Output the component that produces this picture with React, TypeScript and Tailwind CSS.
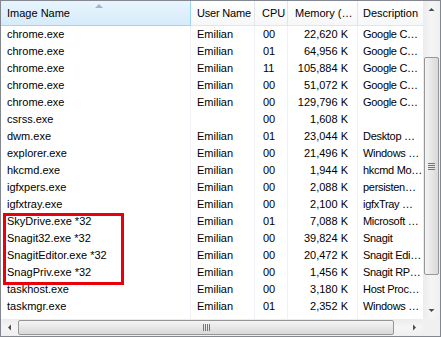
import React from 'react';

type Proc = { name: string; user: string; cpu: string; mem: string; desc: string };

const procs: Proc[] = [
  { name: 'chrome.exe', user: 'Emilian', cpu: '00', mem: '22,620 K', desc: 'Google C…' },
  { name: 'chrome.exe', user: 'Emilian', cpu: '01', mem: '64,956 K', desc: 'Google C…' },
  { name: 'chrome.exe', user: 'Emilian', cpu: '11', mem: '105,884 K', desc: 'Google C…' },
  { name: 'chrome.exe', user: 'Emilian', cpu: '00', mem: '51,072 K', desc: 'Google C…' },
  { name: 'chrome.exe', user: 'Emilian', cpu: '00', mem: '129,796 K', desc: 'Google C…' },
  { name: 'csrss.exe', user: '', cpu: '00', mem: '1,608 K', desc: '' },
  { name: 'dwm.exe', user: 'Emilian', cpu: '01', mem: '23,044 K', desc: 'Desktop …' },
  { name: 'explorer.exe', user: 'Emilian', cpu: '00', mem: '21,496 K', desc: 'Windows …' },
  { name: 'hkcmd.exe', user: 'Emilian', cpu: '00', mem: '1,944 K', desc: 'hkcmd Mo…' },
  { name: 'igfxpers.exe', user: 'Emilian', cpu: '00', mem: '2,088 K', desc: 'persisten…' },
  { name: 'igfxtray.exe', user: 'Emilian', cpu: '00', mem: '2,100 K', desc: 'igfxTray …' },
  { name: 'SkyDrive.exe *32', user: 'Emilian', cpu: '01', mem: '7,088 K', desc: 'Microsoft …' },
  { name: 'Snagit32.exe *32', user: 'Emilian', cpu: '00', mem: '39,824 K', desc: 'Snagit' },
  { name: 'SnagitEditor.exe *32', user: 'Emilian', cpu: '00', mem: '20,472 K', desc: 'Snagit Edi…' },
  { name: 'SnagPriv.exe *32', user: 'Emilian', cpu: '00', mem: '1,456 K', desc: 'Snagit RP…' },
  { name: 'taskhost.exe', user: 'Emilian', cpu: '00', mem: '3,180 K', desc: 'Host Proc…' },
  { name: 'taskmgr.exe', user: 'Emilian', cpu: '01', mem: '2,352 K', desc: 'Windows …' },
];

function Arrow({ dir }: { dir: 'up' | 'down' | 'left' | 'right' }) {
  const pts = {
    up: '0.5,4 3.5,1 6.5,4',
    down: '0.5,1 3.5,4 6.5,1',
    left: '4,0.5 1,3.5 4,6.5',
    right: '1,0.5 4,3.5 1,6.5',
  }[dir];
  const w = dir === 'up' || dir === 'down' ? 7 : 5;
  const h = dir === 'up' || dir === 'down' ? 5 : 7;
  return (
    <svg width={w} height={h} viewBox={`0 0 ${w} ${h}`}>
      <polygon points={pts} fill="#4d4d4d" />
    </svg>
  );
}

export default function App() {
  return (
    <div
      className="relative w-[441px] h-[337px] border border-[#828790] bg-white flex flex-col text-[11px] text-black overflow-hidden"
      style={{ fontFamily: '"Liberation Sans", Arial, sans-serif' }}
    >
      <div className="flex h-[318px]">
        {/* table */}
        <div className="w-[422px] flex flex-col">
          <div className="flex h-[25px] bg-gradient-to-b from-white to-[#f6f7f8] border-b border-[#e5e5e5]">
            <div className="relative w-[190px] flex items-center pl-[6px] bg-gradient-to-b from-[#e8f5fd] to-[#d6ebfa] border-r border-b border-[#96d9f9] -mb-px">
              <svg className="absolute left-[94px] top-[3px]" width="8" height="4" viewBox="0 0 8 4">
                <polygon points="0,4 4,0 8,4" fill="#a2b5cc" />
              </svg>
              Image Name
            </div>
            <div className="w-[64px] flex items-center pl-[6px] tracking-[-0.2px] border-r border-[#e5e5e5]">User Name</div>
            <div className="w-[33px] flex items-center pl-[7px] border-r border-[#e5e5e5]">CPU</div>
            <div className="w-[70px] flex items-center pl-[7px] border-r border-[#e5e5e5]">Memory (…</div>
            <div className="w-[65px] flex items-center pl-[5px]">Description</div>
          </div>
          <div className="flex-1 flex flex-col">
            {procs.map((p, i) => (
              <div key={i} className="flex h-[17px] leading-[17px] whitespace-nowrap">
                <div className="w-[190px] pl-[6px] border-r border-[#eef1f6]">{p.name}</div>
                <div className="w-[64px] pl-[6px] border-r border-[#eef1f6]">{p.user}</div>
                <div className="w-[33px] pl-[8px] border-r border-[#eef1f6]">{p.cpu}</div>
                <div className="w-[70px] pr-[9px] text-right border-r border-[#eef1f6]">{p.mem}</div>
                <div className="w-[65px] pl-[5px] tracking-[-0.3px] overflow-hidden">{p.desc}</div>
              </div>
            ))}
            <div className="flex flex-1">
              <div className="w-[190px] border-r border-[#eef1f6]" />
              <div className="w-[64px] border-r border-[#eef1f6]" />
              <div className="w-[33px] border-r border-[#eef1f6]" />
              <div className="w-[70px] border-r border-[#eef1f6]" />
            </div>
          </div>
        </div>
        {/* vertical scrollbar */}
        <div className="w-[17px] flex flex-col bg-gradient-to-r from-[#ececec] via-[#f5f5f5] to-[#efefef]">
          <div className="h-[17px] flex items-center justify-center">
            <Arrow dir="up" />
          </div>
          <div className="h-[39px]" />
          <div className="mx-px h-[218px] rounded-[2px] border border-[#969696] bg-gradient-to-r from-[#f4f4f4] to-[#d9d9d9] flex items-center justify-center">
            <div className="flex flex-col gap-[1px]">
              <div className="w-[7px] h-px bg-[#777]" />
              <div className="w-[7px] h-px bg-[#777]" />
              <div className="w-[7px] h-px bg-[#777]" />
              <div className="w-[7px] h-px bg-[#777]" />
            </div>
          </div>
          <div className="flex-1" />
          <div className="h-[17px] flex items-center justify-center">
            <Arrow dir="down" />
          </div>
        </div>
      </div>
      {/* horizontal scrollbar */}
      <div className="flex h-[17px]">
        <div className="w-[422px] flex items-center bg-gradient-to-b from-[#ececec] via-[#f5f5f5] to-[#efefef]">
          <div className="w-[17px] h-full flex items-center justify-center">
            <Arrow dir="left" />
          </div>
          <div className="w-[376px] h-[15px] rounded-[2px] border border-[#969696] bg-gradient-to-b from-[#f4f4f4] to-[#d9d9d9] flex items-center justify-center">
            <div className="flex gap-[1px]">
              <div className="w-px h-[7px] bg-[#777]" />
              <div className="w-px h-[7px] bg-[#777]" />
              <div className="w-px h-[7px] bg-[#777]" />
              <div className="w-px h-[7px] bg-[#777]" />
            </div>
          </div>
          <div className="flex-1" />
          <div className="w-[17px] h-full flex items-center justify-center">
            <Arrow dir="right" />
          </div>
        </div>
        <div className="w-[17px] bg-[#f0f0f0]" />
      </div>
      {/* annotation */}
      <div className="absolute left-[2px] top-[212px] w-[121px] h-[72px] border-[3px] border-[#e8000b]" />
    </div>
  );
}
